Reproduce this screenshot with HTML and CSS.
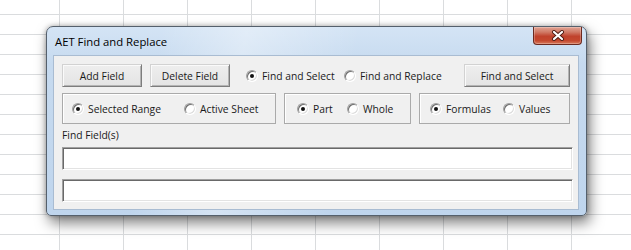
FILE: index.html
```html
<!DOCTYPE html>
<html lang="en">
<head>
    <meta charset="UTF-8">
    <meta name="viewport" content="width=device-width, initial-scale=1.0">
    <title>AET Find and Replace</title>
    <link rel="stylesheet" href="styles.css">
</head>
<body>
    <div class="window">
        <div class="title-bar">
            <span class="title">AET Find and Replace</span>
            <button class="close-button" title="Close">
                <svg width="14" height="11" viewBox="0 0 14 11">
                    <path d="M3 2 L11 9 M11 2 L3 9" stroke="#4d1a12" stroke-width="4" stroke-linecap="round"/>
                    <path d="M3 2 L11 9 M11 2 L3 9" stroke="#fff" stroke-width="2.2" stroke-linecap="round"/>
                </svg>
            </button>
        </div>
        <div class="client">
            <div class="toolbar">
                <button class="form-button">Add Field</button>
                <button class="form-button">Delete Field</button>
                <div class="mode-group">
                    <label class="option option-mode"><span class="radio checked"></span>Find and Select</label>
                    <label class="option"><span class="radio"></span>Find and Replace</label>
                </div>
                <button class="form-button action-button">Find and Select</button>
            </div>

            <div class="frames">
                <div class="frame frame-scope">
                    <label class="option option-range"><span class="radio checked"></span>Selected Range</label>
                    <label class="option"><span class="radio"></span>Active Sheet</label>
                </div>
                <div class="frame frame-match">
                    <label class="option option-part"><span class="radio checked"></span>Part</label>
                    <label class="option"><span class="radio"></span>Whole</label>
                </div>
                <div class="frame frame-look">
                    <label class="option option-formulas"><span class="radio checked"></span>Formulas</label>
                    <label class="option"><span class="radio"></span>Values</label>
                </div>
            </div>

            <div class="field-label">Find Field(s)</div>
            <input class="field" type="text" spellcheck="false">
            <input class="field field-last" type="text" spellcheck="false">
        </div>
    </div>
</body>
</html>
```

FILE: styles.css
```css
:root {
    --grid-line: #dadcde;
    --client-bg: #f0f0f0;
    --text-color: #1a1a1a;
    --ui-font: "Open Sans", "Noto Sans", sans-serif;
}

body {
    margin: 0;
    padding: 26px 0 0 46px;
    min-height: 250px;
    box-sizing: border-box;
    background-color: #fff;
    background-image:
        linear-gradient(to right, var(--grid-line) 1px, transparent 1px),
        linear-gradient(to bottom, var(--grid-line) 1px, transparent 1px);
    background-size: 64px 20px;
    background-position: 59px 14px;
    font-family: var(--ui-font);
    font-size: 10.3px;
    color: var(--text-color);
}

/* window chrome */
.window {
    width: 541px;
    height: 190px;
    box-sizing: border-box;
    padding: 0 7px 5px 6px;
    border: 1px solid #55606c;
    border-radius: 7px 7px 5px 5px;
    background:
        linear-gradient(100deg, rgba(255,255,255,0) 20%, rgba(255,255,255,0.35) 35%, rgba(255,255,255,0) 55%),
        linear-gradient(to bottom, #d4e4f5 0%, #c6daef 20%, #bfd5ed 100%);
    box-shadow: 3px 7px 14px rgba(0,0,0,0.5), 0 0 5px rgba(0,0,0,0.3);
    display: flex;
    flex-direction: column;
}

.title-bar {
    height: 28px;
    display: flex;
    align-items: center;
    padding-left: 2px;
}

.title {
    font-size: 11.3px;
    color: #000;
    flex: 1;
}

.close-button {
    align-self: flex-start;
    width: 49px;
    height: 18px;
    margin-right: -3px;
    padding: 0;
    border: 1px solid #6b2a20;
    border-top: none;
    border-radius: 0 0 4px 4px;
    background: linear-gradient(to bottom, #e2a494 0%, #d07a66 30%, #c0422c 55%, #c4492f 80%, #d87a5c 100%);
    box-shadow: inset 0 0 0 1px rgba(255,255,255,0.25);
    display: flex;
    align-items: center;
    justify-content: center;
    cursor: pointer;
}

.client {
    flex: 1;
    background-color: var(--client-bg);
    border: 1px solid #a9bcd2;
    padding: 8px 8px 7px 8px;
    display: flex;
    flex-direction: column;
}

/* controls */
.toolbar {
    height: 23px;
    display: flex;
    align-items: center;
}

.form-button {
    width: 80px;
    height: 23px;
    margin-right: 8px;
    padding: 0;
    font-family: var(--ui-font);
    font-size: 10.3px;
    color: var(--text-color);
    background: linear-gradient(to bottom, #eeeeee, #e4e4e4);
    border: 1px solid;
    border-color: #d2d2d2 #7d7d7d #7d7d7d #d2d2d2;
    box-shadow: inset 1px 1px 0 #fafafa, inset -1px -1px 0 #b4b4b4;
}

.action-button {
    width: 106px;
    margin-left: auto;
    margin-right: 0;
}

.mode-group {
    display: flex;
    align-items: center;
    margin-left: 8px;
}

.option {
    display: inline-flex;
    align-items: center;
    white-space: nowrap;
}

.option-mode { width: 98px; }
.option-range { width: 112px; }
.option-part { width: 50px; }
.option-formulas { width: 73px; }

.radio {
    position: relative;
    width: 12px;
    height: 12px;
    box-sizing: border-box;
    margin-right: 4px;
    border: 1px solid;
    border-color: #a0a0a0 #fff #fff #a0a0a0;
    border-radius: 50%;
    background-color: #fff;
    box-shadow: inset 1px 1px 0 #6e6e6e, inset -1px -1px 0 #dcdcdc;
}

.radio.checked::after {
    content: "";
    position: absolute;
    left: 3px;
    top: 3px;
    width: 4px;
    height: 4px;
    border-radius: 50%;
    background-color: #111;
}

.frames {
    display: flex;
    gap: 8px;
    margin-top: 6px;
    height: 31px;
}

.frame {
    box-sizing: border-box;
    height: 31px;
    display: flex;
    align-items: center;
    border: 1px solid #aaaaaa;
    box-shadow: inset 1px 1px 0 #fff;
}

.frame-scope {
    width: 214px;
    padding-left: 9px;
}

.frame-match {
    width: 127px;
    padding-left: 12px;
}

.frame-look {
    flex: 1;
    padding-left: 10px;
}

.field-label {
    margin-top: 5px;
    height: 13px;
    line-height: 13px;
}

.field {
    display: block;
    height: 23px;
    margin: 5px -3px 0 0;
    padding: 0 4px;
    box-sizing: border-box;
    border: 1px solid;
    border-color: #a0a0a0 #fff #fff #a0a0a0;
    box-shadow: inset 1px 1px 0 #696969, inset -1px -1px 0 #e3e3e3;
    background-color: #fff;
    font-family: var(--ui-font);
    font-size: 10.3px;
    outline: none;
}

.field-last {
    margin-top: 9px;
}
```
